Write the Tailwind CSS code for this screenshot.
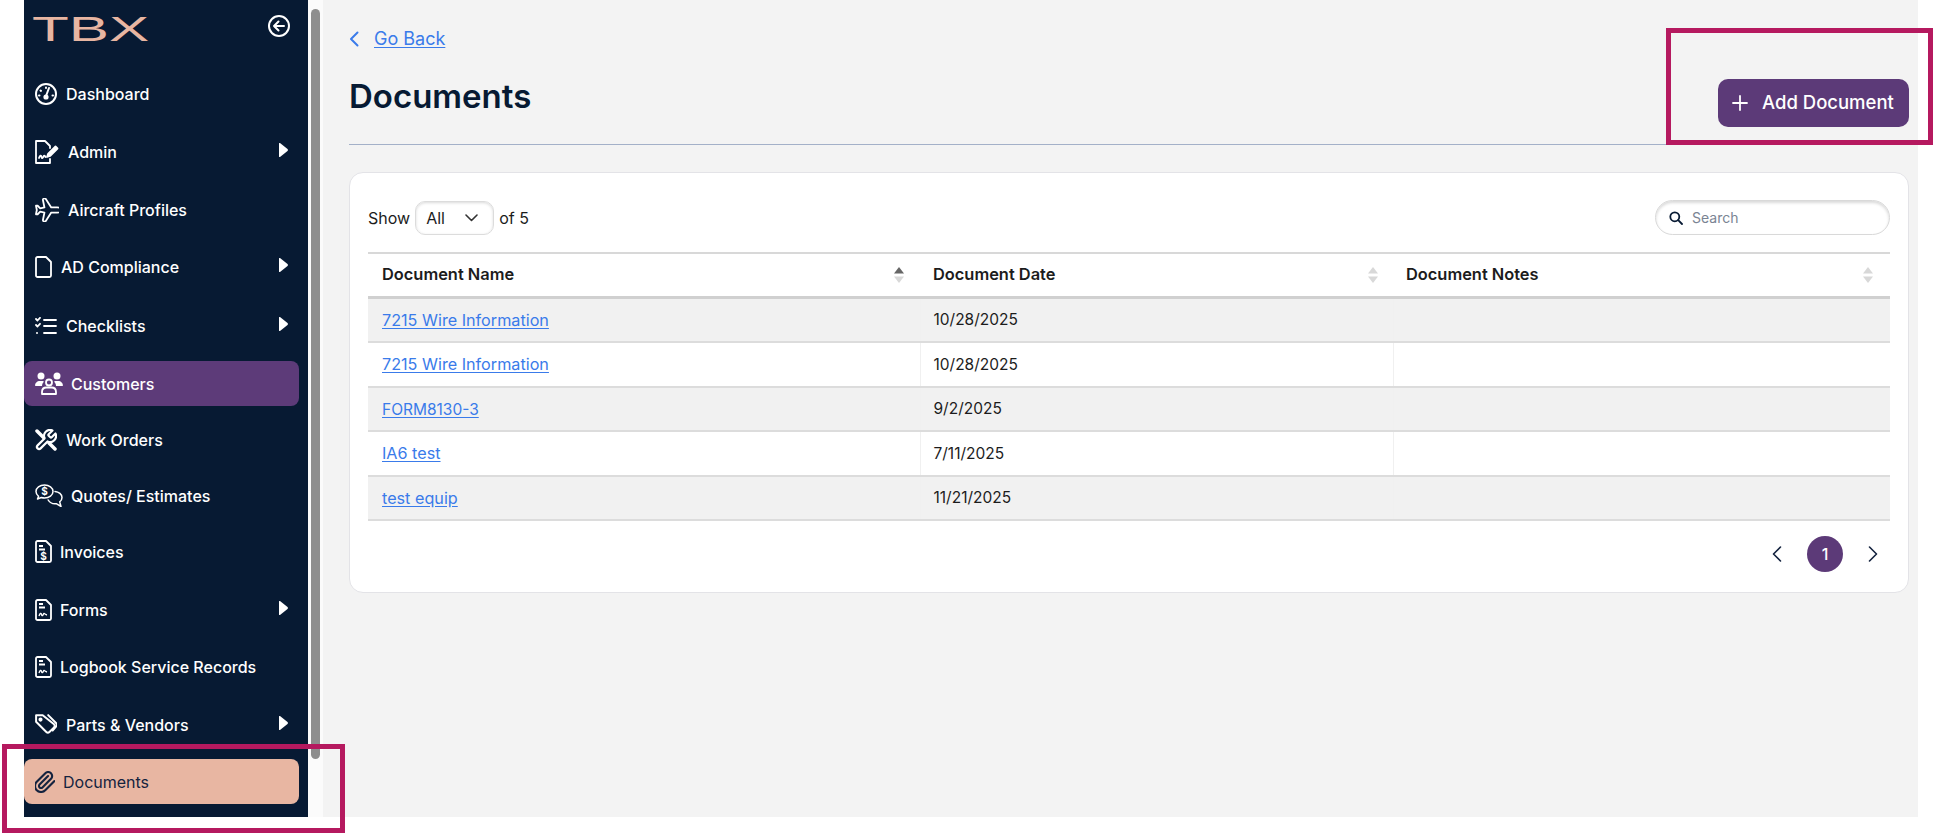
<!DOCTYPE html>
<html lang="en">
<head>
    <meta charset="UTF-8">
    <title>Documents</title>
    <script src="https://cdn.jsdelivr.net/npm/@tailwindcss/browser@4"></script>
</head>
<body class="relative bg-white h-[836px] w-[1933px] overflow-hidden font-['Inter','Noto_Sans',sans-serif]">

    <div class="flex h-[817px]">
        <!-- Sidebar -->
        <aside class="ml-[24px] w-[284px] shrink-0 bg-[#071a33] text-white text-[16px] font-[450]">
            <div class="h-[71px] flex items-start justify-between pl-[8px] pr-[17px] pt-[17px]">
                <span class="text-[#e8b6a2] text-[35px] leading-[24px] font-normal origin-left scale-x-[1.72] font-['Liberation_Sans',sans-serif]">TBX</span>
                <svg class="w-[24px] h-[24px] -mt-[3px]" viewBox="0 0 24 24" fill="none" stroke="currentColor" stroke-width="2" stroke-linecap="round" stroke-linejoin="round"><circle cx="12" cy="12" r="10"/><path d="M17 12H7M11.500 7.500 7 12l4.500 4.500"/></svg>
            </div>
            <nav class="flex flex-col">
                <a class="h-[45px] flex items-center gap-[9px] pl-[11px]">
                    <svg class="w-[22px] h-[22px]" viewBox="0 0 22 22" fill="none" stroke="currentColor" stroke-width="2" stroke-linecap="round"><circle cx="11" cy="11" r="10"/><path d="M11 13 14 5M11 4.500v.5M5.500 7.500l.5.4M4 12.500h.5M17.500 12.500h.5"/><circle cx="11" cy="14" r="1.600" fill="currentColor"/></svg>
                    <span>Dashboard</span>
                </a>
                <a class="mt-[13px] h-[45px] flex items-center gap-[9px] pl-[11px] pr-[20px]">
                    <svg class="w-[24px] h-[24px]" viewBox="0 0 24 24" fill="none" stroke="currentColor" stroke-width="1.800" stroke-linecap="round" stroke-linejoin="round"><path d="M15 19v4H1V1h9l5 5v2"/><path d="M4 18c1-3 2-3 2.500-1s1.500 1 2-.5 1.500-.5 2 .5"/><path d="m12 17 1-3 7.500-7.500 2 2L15 16z" fill="currentColor"/></svg>
                    <span>Admin</span>
                    <svg class="ml-auto mb-[4px] w-[9px] h-[14px]" viewBox="0 0 9 14" fill="currentColor"><path d="M1 0 8.500 6c.6.500.6 1.500 0 2L1 14c-.5.300-1 0-1-.6V.6C0 0 .5-.3 1 0z"/></svg>
                </a>
                <a class="mt-[13px] h-[45px] flex items-center gap-[9px] pl-[11px]">
                    <svg class="w-[24px] h-[24px]" viewBox="2 2 20 20" fill="none" stroke="currentColor" stroke-width="1.500" stroke-linejoin="round"><path transform="rotate(45 12 12)" d="M17.800 19.200 16 11l3.500-3.500C21 6 21.500 4 21 3c-1-.5-3 0-4.500 1.500L13 8 4.800 6.200c-.5-.1-.9.100-1.100.5l-.3.500c-.2.500-.1 1 .3 1.300L9 12l-2 3H4l-1 1 3 2 2 3 1-1v-3l3-2 3.500 5.300c.3.400.8.500 1.300.3l.5-.2c.4-.3.6-.7.5-1.200z"/></svg>
                    <span>Aircraft Profiles</span>
                </a>
                <a class="mt-[12px] h-[45px] flex items-center gap-[9px] pl-[11px] pr-[20px]">
                    <svg class="w-[17px] h-[22px]" viewBox="0 0 17 22" fill="none" stroke="currentColor" stroke-width="1.800" stroke-linejoin="round"><path d="M2.500 1H11l5 5v13.500a1.500 1.500 0 0 1-1.500 1.500h-12A1.500 1.500 0 0 1 1 19.500v-17A1.500 1.500 0 0 1 2.500 1z"/></svg>
                    <span>AD Compliance</span>
                    <svg class="ml-auto mb-[4px] w-[9px] h-[14px]" viewBox="0 0 9 14" fill="currentColor"><path d="M1 0 8.500 6c.6.500.6 1.500 0 2L1 14c-.5.300-1 0-1-.6V.6C0 0 .5-.3 1 0z"/></svg>
                </a>
                <a class="mt-[14px] h-[45px] flex items-center gap-[9px] pl-[11px] pr-[20px]">
                    <svg class="w-[22px] h-[18px]" viewBox="0 0 22 18" fill="none" stroke="currentColor" stroke-width="1.800" stroke-linecap="round" stroke-linejoin="round"><path d="M9 3h12M9 9h12M9 16h12M1 2l1.500 1.500L5 .8M1 8l1.500 1.500L5 6.800"/><circle cx="2" cy="16" r="1" fill="currentColor" stroke="none"/></svg>
                    <span>Checklists</span>
                    <svg class="ml-auto mb-[4px] w-[9px] h-[14px]" viewBox="0 0 9 14" fill="currentColor"><path d="M1 0 8.500 6c.6.500.6 1.500 0 2L1 14c-.5.300-1 0-1-.6V.6C0 0 .5-.3 1 0z"/></svg>
                </a>
                <a class="mt-[13px] h-[45px] w-[275px] rounded-[8px] bg-[#5d3b79] flex items-center gap-[8px] pl-[11px]">
                    <svg class="w-[28px] h-[23px]" viewBox="0 0 28 23" fill="currentColor"><circle cx="6" cy="4" r="3.500"/><circle cx="22" cy="4" r="3.500"/><path d="M0 14c0-3 2-5 5-5h2.500c1 0 1.500.5 1 1.200-1 1-1.500 2.200-1.500 3.800H1c-.6 0-1-.4-1-1zM28 14c0-3-2-5-5-5h-2.500c-1 0-1.500.5-1 1.200 1 1 1.500 2.200 1.500 3.800h6c.6 0 1-.4 1-1z"/><circle cx="14" cy="10.500" r="3" fill="none" stroke="currentColor" stroke-width="1.800"/><path d="M7 22v-2c0-3 2-4.500 4.500-4.500h5c2.500 0 4.500 1.500 4.500 4.500v2z" fill="none" stroke="currentColor" stroke-width="1.800" stroke-linejoin="round"/></svg>
                    <span>Customers</span>
                </a>
                <a class="mt-[11px] h-[45px] flex items-center gap-[9px] pl-[11px]">
                    <svg class="w-[22px] h-[22px]" viewBox="1 1 22 22" fill="none" stroke="currentColor" stroke-width="2.200" stroke-linecap="round" stroke-linejoin="round"><path d="M14.700 6.300a1 1 0 0 0 0 1.400l1.600 1.600a1 1 0 0 0 1.400 0l3.770-3.770a6 6 0 0 1-7.940 7.940l-6.910 6.910a2.120 2.120 0 0 1-3-3l6.910-6.910a6 6 0 0 1 7.940-7.940l-3.760 3.760z"/><path stroke-width="3.500" d="M3 3l6.500 6.500M15 15l6 6"/></svg>
                    <span>Work Orders</span>
                </a>
                <a class="mt-[11px] h-[45px] flex items-center gap-[8px] pl-[11px]">
                    <svg class="w-[28px] h-[23px]" viewBox="0 0 28 23" fill="none" stroke="currentColor" stroke-width="1.500" stroke-linecap="round" stroke-linejoin="round"><path d="M9.500 1C4.800 1 1 3.700 1 7.500c0 2 1 3.600 2.600 4.800L2.500 15l3.800-1.500c1 .3 2.100.5 3.200.5 4.700 0 8.500-2.800 8.500-6.500S14.200 1 9.500 1z"/><path d="M20 7.500c3.800.3 7 2.700 7 6 0 1.800-.9 3.300-2.300 4.400l1.300 4.600-4.800-2.800c-3 .3-6.500-1-8-3.700"/><text x="9.500" y="11" text-anchor="middle" font-size="10" font-weight="700" fill="currentColor" stroke="none">$</text></svg>
                    <span>Quotes/ Estimates</span>
                </a>
                <a class="mt-[11px] h-[45px] flex items-center gap-[8px] pl-[11px]">
                    <svg class="w-[17px] h-[23px]" viewBox="0 0 17 23" fill="none" stroke="currentColor" stroke-width="1.800" stroke-linejoin="round"><path d="M2.500 1H11l5 5v14.500a1.500 1.500 0 0 1-1.500 1.500h-12A1.500 1.500 0 0 1 1 20.500v-18A1.500 1.500 0 0 1 2.500 1z"/><path d="M4 6h4M4 9.500h6"/><text x="8.500" y="19.500" text-anchor="middle" font-size="10" font-weight="700" fill="currentColor" stroke="none">$</text></svg>
                    <span>Invoices</span>
                </a>
                <a class="mt-[13px] h-[45px] flex items-center gap-[8px] pl-[11px] pr-[20px]">
                    <svg class="w-[17px] h-[22px]" viewBox="0 0 17 22" fill="none" stroke="currentColor" stroke-width="1.800" stroke-linejoin="round"><path d="M2.500 1H11l5 5v13.500a1.500 1.500 0 0 1-1.500 1.500h-12A1.500 1.500 0 0 1 1 19.500v-17A1.500 1.500 0 0 1 2.500 1z"/><path d="M4 5h4M4 8.500h6"/><path stroke-width="1.300" d="M4 17c1-3 2-3.500 2.500-1.500s1.500 1 2-.5 1.500.5 3.500 1"/></svg>
                    <span>Forms</span>
                    <svg class="ml-auto mb-[4px] w-[9px] h-[14px]" viewBox="0 0 9 14" fill="currentColor"><path d="M1 0 8.500 6c.6.500.6 1.500 0 2L1 14c-.5.300-1 0-1-.6V.6C0 0 .5-.3 1 0z"/></svg>
                </a>
                <a class="mt-[12px] h-[45px] flex items-center gap-[8px] pl-[11px]">
                    <svg class="w-[17px] h-[22px]" viewBox="0 0 17 22" fill="none" stroke="currentColor" stroke-width="1.800" stroke-linejoin="round"><path d="M2.500 1H11l5 5v13.500a1.500 1.500 0 0 1-1.500 1.500h-12A1.500 1.500 0 0 1 1 19.500v-17A1.500 1.500 0 0 1 2.500 1z"/><path d="M4 5h4M4 8.500h6"/><path stroke-width="1.300" d="M4 17c1-3 2-3.500 2.500-1.500s1.500 1 2-.5 1.500.5 3.500 1"/></svg>
                    <span>Logbook Service Records</span>
                </a>
                <a class="mt-[13px] h-[45px] flex items-center gap-[9px] pl-[11px] pr-[20px]">
                    <svg class="w-[22px] h-[21px]" viewBox="2 3 20 19" fill="none" stroke="currentColor" stroke-width="1.800" stroke-linecap="round" stroke-linejoin="round"><path d="M9 4H3v6l9.300 9.300a2 2 0 0 0 2.800 0l4.200-4.200a2 2 0 0 0 0-2.800z"/><path d="m14 4 7.300 7.300a2 2 0 0 1 0 2.800L18 18"/><circle cx="7" cy="8" r="1" fill="currentColor"/></svg>
                    <span>Parts &amp; Vendors</span>
                    <svg class="ml-auto mb-[4px] w-[9px] h-[14px]" viewBox="0 0 9 14" fill="currentColor"><path d="M1 0 8.500 6c.6.500.6 1.500 0 2L1 14c-.5.300-1 0-1-.6V.6C0 0 .5-.3 1 0z"/></svg>
                </a>
                <a class="mt-[12px] h-[45px] w-[275px] rounded-[8px] bg-[#e8b6a2] text-[#14233f] font-normal flex items-center gap-[8px] pl-[11px]">
                    <svg class="w-[20px] h-[22px]" viewBox="2 1 20 22" fill="none" stroke="currentColor" stroke-width="2.100" stroke-linecap="round" stroke-linejoin="round"><path d="M21.440 11.050l-9.190 9.190a6 6 0 0 1-8.490-8.490l8.570-8.570A4 4 0 1 1 18 8.840l-8.590 8.570a2 2 0 0 1-2.830-2.830l8.490-8.480"/></svg>
                    <span>Documents</span>
                </a>
            </nav>
        </aside>

        <!-- Scrollbar -->
        <div class="w-[15px] shrink-0 bg-[#fbfbfb] pl-[3px] pt-[9px]">
            <div class="w-[9px] h-[750px] rounded-full bg-[#8e8e8e]"></div>
        </div>

        <!-- Main -->
        <main class="w-[1595px] shrink-0 bg-[#f3f3f3] pl-[26px] pr-[9px] text-[#1c1c1c]">
            <a class="h-[77px] flex items-start gap-[15px] pt-[27px] text-[#3a7bea] text-[18px] leading-[24px]">
                <svg class="w-[10px] h-[16px] mt-[4px]" viewBox="0 0 10 16" fill="none" stroke="currentColor" stroke-width="2" stroke-linecap="round" stroke-linejoin="round"><path d="M8.500 1.500 2 8l6.500 6.500"/></svg>
                <span class="underline underline-offset-2">Go Back</span>
            </a>
            <div class="h-[68px] flex items-start justify-between border-b border-[#a3b0c8]">
                <h1 class="text-[#071a33] text-[33px] leading-[38px] font-semibold">Documents</h1>
                <button class="mt-[2px] w-[191px] h-[48px] rounded-[10px] bg-[#5c3a78] text-white flex items-center gap-[14px] pl-[14px] text-[18.500px] font-medium">
                    <svg class="w-[16px] h-[16px]" viewBox="0 0 16 16" fill="none" stroke="currentColor" stroke-width="1.800" stroke-linecap="round"><path d="M8 1v14M1 8h14"/></svg>
                    <span>Add Document</span>
                </button>
            </div>

            <section class="mt-[27px] w-[1560px] h-[421px] bg-white rounded-[14px] border border-[#e3e3e7] pt-[27px] pl-[18px] pr-[18px]">
                <div class="h-[52px] flex items-start justify-between text-[16px]">
                    <div class="flex items-center gap-[5px] h-[35px]">
                        <span>Show</span>
                        <div class="w-[79px] h-[34px] rounded-[10px] border border-[#dcdcdc] shadow-[inset_0_1px_3px_rgba(0,0,0,0.15)] flex items-center justify-between pl-[10px] pr-[15px]">
                            <span>All</span>
                            <svg class="w-[13px] h-[8px]" viewBox="0 0 13 8" fill="none" stroke="#333" stroke-width="1.600" stroke-linecap="round" stroke-linejoin="round"><path d="M1 1l5.500 5.500L12 1"/></svg>
                        </div>
                        <span>of 5</span>
                    </div>
                    <div class="w-[235px] h-[35px] rounded-full border border-[#d9d9d9] shadow-[inset_0_2px_3px_rgba(0,0,0,0.15)] flex items-center gap-[9px] pl-[13px] text-[14px] text-[#7a8493]">
                        <svg class="w-[14px] h-[14px]" viewBox="0 0 14 14" fill="none" stroke="#071a33" stroke-width="1.800" stroke-linecap="round"><circle cx="5.800" cy="5.800" r="4.500"/><path d="M9.200 9.200 13 13"/></svg>
                        <span>Search</span>
                    </div>
                </div>

                <table class="w-[1522px] table-fixed border-collapse text-[16.200px]">
                    <colgroup><col class="w-[552px]"><col class="w-[473px]"><col class="w-[497px]"></colgroup>
                    <thead>
                        <tr class="h-[44px] border-t-2 border-b-[3px] border-t-[#d8d8d8] border-b-[#d0d0d0] text-[16.400px]">
                            <th class="pl-[14px] pr-[16px] font-semibold text-left">
                                <div class="flex items-center justify-between">Document Name
                                    <svg class="w-[12px] h-[16px] mr-[-1px]" viewBox="0 0 12 16"><path d="M6 0l5 6.500H1z" fill="#666"/><path d="M6 16l5-6.500H1z" fill="#d8d8d8"/></svg>
                                </div>
                            </th>
                            <th class="pl-[13px] pr-[14px] font-semibold text-left">
                                <div class="flex items-center justify-between">Document Date
                                    <svg class="w-[12px] h-[16px]" viewBox="0 0 12 16"><path d="M6 0l5 6.500H1z" fill="#d8d8d8"/><path d="M6 16l5-6.500H1z" fill="#d8d8d8"/></svg>
                                </div>
                            </th>
                            <th class="pl-[13px] pr-[16px] font-semibold text-left">
                                <div class="flex items-center justify-between">Document Notes
                                    <svg class="w-[12px] h-[16px]" viewBox="0 0 12 16"><path d="M6 0l5 6.500H1z" fill="#d8d8d8"/><path d="M6 16l5-6.500H1z" fill="#d8d8d8"/></svg>
                                </div>
                            </th>
                        </tr>
                    </thead>
                    <tbody>
                        <tr class="h-[45px] bg-[#f1f1f1] border-b-2 border-[#dcdcdc]">
                            <td class="pl-[14px] border-r border-[#f0f0f0]"><a class="text-[#3a7bea] underline underline-offset-2">7215 Wire Information</a></td>
                            <td class="pl-[13px] border-r border-[#f0f0f0] text-[15.500px]">10/28/2025</td>
                            <td></td>
                        </tr>
                        <tr class="h-[45px] border-b-2 border-[#dcdcdc]">
                            <td class="pl-[14px] border-r border-[#f0f0f0]"><a class="text-[#3a7bea] underline underline-offset-2">7215 Wire Information</a></td>
                            <td class="pl-[13px] border-r border-[#f0f0f0] text-[15.500px]">10/28/2025</td>
                            <td></td>
                        </tr>
                        <tr class="h-[44px] bg-[#f1f1f1] border-b-2 border-[#dcdcdc]">
                            <td class="pl-[14px] border-r border-[#f0f0f0]"><a class="text-[#3a7bea] underline underline-offset-2 text-[15.500px]">FORM8130-3</a></td>
                            <td class="pl-[13px] border-r border-[#f0f0f0] text-[15.500px]">9/2/2025</td>
                            <td></td>
                        </tr>
                        <tr class="h-[45px] border-b-2 border-[#dcdcdc]">
                            <td class="pl-[14px] border-r border-[#f0f0f0]"><a class="text-[#3a7bea] underline underline-offset-2">IA6 test</a></td>
                            <td class="pl-[13px] border-r border-[#f0f0f0] text-[15.500px]">7/11/2025</td>
                            <td></td>
                        </tr>
                        <tr class="h-[44px] bg-[#f1f1f1] border-b-2 border-[#dcdcdc]">
                            <td class="pl-[14px] border-r border-[#f0f0f0]"><a class="text-[#3a7bea] underline underline-offset-2">test equip</a></td>
                            <td class="pl-[13px] border-r border-[#f0f0f0] text-[15.500px]">11/21/2025</td>
                            <td></td>
                        </tr>
                    </tbody>
                </table>

                <div class="mt-[15px] flex items-center justify-end pr-[12px]">
                    <svg class="w-[10px] h-[16px]" viewBox="0 0 10 16" fill="none" stroke="#14233f" stroke-width="1.600" stroke-linecap="round" stroke-linejoin="round"><path d="M8.500 1 1.500 8l7 7"/></svg>
                    <span class="w-[36px] h-[36px] ml-[25px] mr-[25px] rounded-full bg-[#5c3a78] text-white flex items-center justify-center text-[16px] font-medium">1</span>
                    <svg class="w-[10px] h-[16px]" viewBox="0 0 10 16" fill="none" stroke="#14233f" stroke-width="1.600" stroke-linecap="round" stroke-linejoin="round"><path d="M1.500 1l7 7-7 7"/></svg>
                </div>
            </section>
        </main>
    </div>

    <!-- Annotation boxes drawn over the screenshot -->
    <div class="absolute left-[2px] top-[744px] w-[343px] h-[89px] border-[5px] border-[#b5195f]"></div>
    <div class="absolute left-[1666px] top-[28px] w-[267px] h-[117px] border-[5px] border-[#b5195f]"></div>
</body>
</html>
